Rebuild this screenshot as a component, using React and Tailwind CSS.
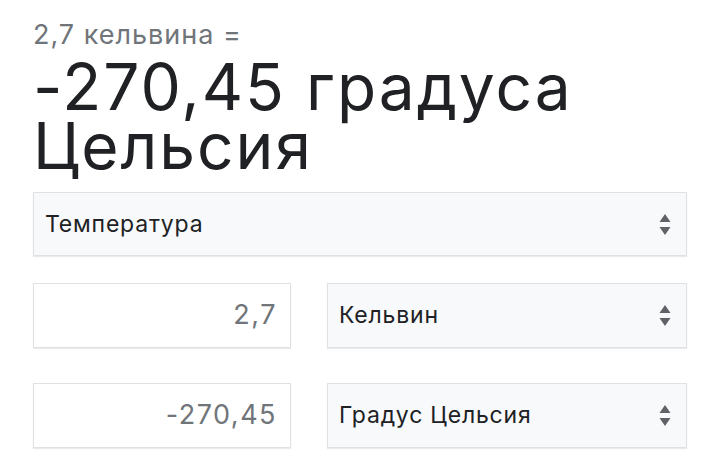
import React from 'react';

const Arrows = () => (
  <svg width="12" height="23" viewBox="0 0 12 23" className="shrink-0">
    <path d="M6 1 L11.5 9 L0.5 9 Z" fill="#5f6368" />
    <path d="M6 22 L11.5 14 L0.5 14 Z" fill="#5f6368" />
  </svg>
);

const Select = ({ label, className = '' }) => (
  <div
    className={`flex items-center justify-between bg-[#f8f9fa] border border-[#dfe1e5] shadow-[0_1px_1px_rgba(0,0,0,0.08)] pl-[11px] pr-[15px] ${className}`}
  >
    <span className="text-[23px] tracking-[0.8px] text-[#202124]">{label}</span>
    <Arrows />
  </div>
);

const Field = ({ value }) => (
  <div className="w-[258px] h-[65px] flex items-center justify-end bg-white border border-[#dfe1e5] shadow-[0_1px_1px_rgba(0,0,0,0.08)] pr-[13px]">
    <span className="text-[27px] tracking-[1.5px] text-[#70757a]">{value}</span>
  </div>
);

export default function App() {
  return (
    <div className="w-[720px] h-[465px] bg-white px-[33px] pt-[17px] overflow-hidden font-['Inter',sans-serif]">
      <div className="text-[27px] leading-[36px] tracking-[1px] text-[#70757a]">2,7 кельвина =</div>
      <div className="text-[64px] leading-[59px] tracking-[2px] text-[#202124] mt-[4px]">
        -270,45 градуса Цельсия
      </div>
      <Select label="Температура" className="mt-[17px] h-[64px]" />
      <div className="mt-[27px] flex flex-col gap-[35px]">
        <div className="flex justify-between">
          <Field value="2,7" />
          <Select label="Кельвин" className="w-[360px] h-[65px]" />
        </div>
        <div className="flex justify-between">
          <Field value="-270,45" />
          <Select label="Градус Цельсия" className="w-[360px] h-[65px]" />
        </div>
      </div>
    </div>
  );
}
